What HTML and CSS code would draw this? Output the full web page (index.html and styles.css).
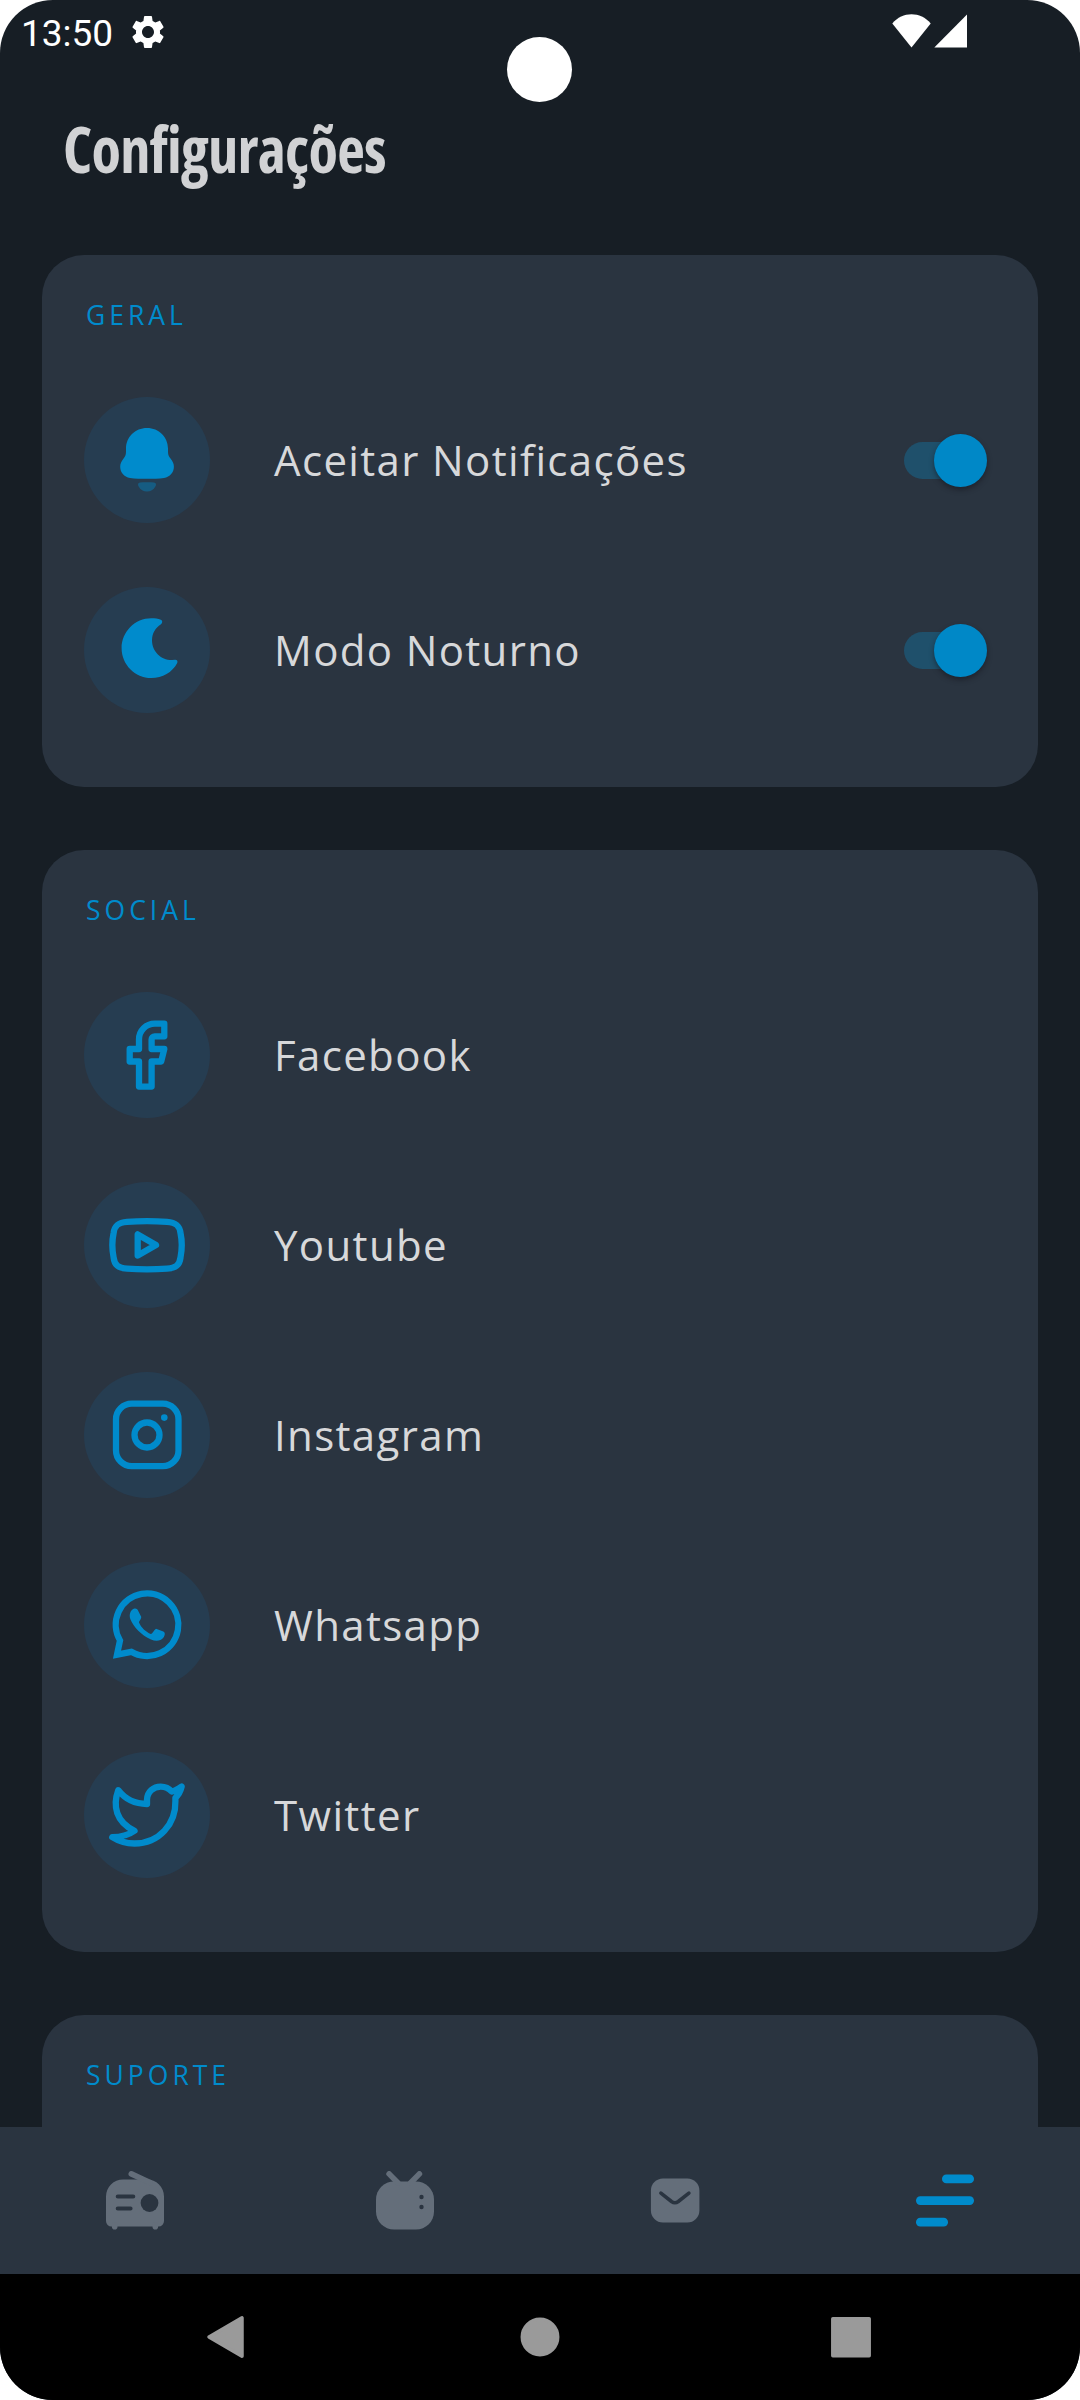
FILE: index.html
```html
<!DOCTYPE html>
<html lang="pt-BR">
<head>
  <meta charset="utf-8">
  <title>Configurações</title>
  <meta name="viewport" content="width=device-width">
  <link rel="stylesheet" href="styles.css">
</head>
<body>

<div class="screen">
  <div class="camera"></div>

  <header class="status-bar">
    <span class="clock">13:50</span>
    <svg class="status-gear" viewBox="0 0 24 24"><path d="M19.14 12.94c.04-.3.06-.61.06-.94 0-.32-.02-.64-.07-.94l2.03-1.58c.18-.14.23-.41.12-.61l-1.92-3.32c-.12-.22-.37-.29-.59-.22l-2.39.96c-.5-.38-1.03-.7-1.62-.94l-.36-2.54c-.04-.24-.24-.41-.48-.41h-3.84c-.24 0-.43.17-.47.41l-.36 2.54c-.59.24-1.13.57-1.62.94l-2.39-.96c-.22-.08-.47 0-.59.22L2.74 8.87c-.12.21-.08.47.12.61l2.03 1.58c-.05.3-.09.63-.09.94s.02.64.07.94l-2.03 1.58c-.18.14-.23.41-.12.61l1.92 3.32c.12.22.37.29.59.22l2.39-.96c.5.38 1.03.7 1.62.94l.36 2.54c.05.24.24.41.48.41h3.84c.24 0 .44-.17.47-.41l.36-2.54c.59-.24 1.13-.56 1.62-.94l2.39.96c.22.08.47 0 .59-.22l1.92-3.32c.12-.22.07-.47-.12-.61l-2.01-1.58zM12 15.6c-1.98 0-3.6-1.62-3.6-3.6s1.62-3.6 3.6-3.6 3.6 1.62 3.6 3.6-1.62 3.6-3.6 3.6z"/></svg>
    <svg class="status-signal" viewBox="0 0 76 34"><path d="M.3 9.4C10.500-2.800 28.500-2.800 38.700 9.400L19.500 33.500Z"/><path d="M42.300 33.500L75 .5V33.500Z"/></svg>
  </header>

  <main class="content">
    <h1 class="title"><span>Configurações</span></h1>

    <section class="card">
      <h2 class="card-label">GERAL</h2>
      <ul class="rows">
        <li class="row">
          <span class="badge"><svg class="solid" viewBox="0 0 126 126"><path d="M63 31C51 31 42 40.200 42 51.500V55C42 58 41 59.500 39.400 61.800C37.300 64.500 36.200 66.800 36.200 69.700C36.200 75.500 40 79.800 46 80.900C56 82.100 70 82.100 80 80.900C86 79.800 89.900 75.500 89.900 69.700C89.900 66.800 88.800 64.500 86.700 61.800C85 59.500 84 58 84 55V51.500C84 40.200 75 31 63 31Z"/><path class="faded" d="M56 85.600C60 85 66 85 70 85.600C72 86 72.500 87.500 71.500 89.300C69.500 93 66.500 94.600 63 94.600S56.500 93 54.500 89.300C53.500 87.500 54 86 56 85.600Z"/></svg></span>
          <span class="row-label">Aceitar Notificações</span>
          <span class="switch"></span>
        </li>
        <li class="row">
          <span class="badge"><svg class="solid" viewBox="0 0 126 126"><path d="M67.300 31.300C71 31.300 74 31.700 76.800 32.700C78.700 33.600 78.700 35.600 77 37.200C71 41 68 46.500 68 53.300C68 64.300 76.700 73.200 88 73.100L91 72.700C93.200 72.600 94.100 74.200 93.100 76.200C88.300 85.200 78.500 91 67.300 91C51 91 37.600 77.500 37.600 61.200C37.600 44.700 51 31.300 67.300 31.300Z"/></svg></span>
          <span class="row-label">Modo Noturno</span>
          <span class="switch"></span>
        </li>
      </ul>
    </section>

    <section class="card">
      <h2 class="card-label">SOCIAL</h2>
      <ul class="rows">
        <li class="row">
          <span class="badge"><svg viewBox="0 0 126 126"><path d="M80.300 31.700V44.300H70.800A3.200 3.200 0 0 0 67.600 47.500V57H80.300L77.200 69.500H67.600V94.600H55V69.500H45.700V57H55V47.500A15.800 15.800 0 0 1 70.800 31.700Z"/></svg></span>
          <span class="row-label">Facebook</span>
        </li>
        <li class="row">
          <span class="badge"><svg viewBox="0 0 126 126"><path d="M43 39.800C56 38.800 70 38.800 83 39.800C92 40.400 95.600 43.500 96.500 51C98.200 59 98.200 67 96.500 75.500C95.600 83 92 86 83 86.600C70 87.600 56 87.600 43 86.600C34 86 30.500 83 29.600 75.500C27.900 67 27.900 59 29.600 51C30.500 43.500 34 40.400 43 39.800Z"/><path d="M53.700 52.400V73.600L72 63Z"/></svg></span>
          <span class="row-label">Youtube</span>
        </li>
        <li class="row">
          <span class="badge"><svg viewBox="0 0 126 126"><rect x="32" y="31.700" width="62.500" height="62.500" rx="15.700"/><circle cx="63" cy="63" r="12.500"/><circle class="dot" cx="80.300" cy="45.600" r="3.300"/></svg></span>
          <span class="row-label">Instagram</span>
        </li>
        <li class="row">
          <span class="badge"><svg viewBox="0 0 126 126"><path class="miter" d="M36 78.500A31.300 31.300 0 1 1 47.300 89.800L33 92.700Z"/><path class="dot" d="M50.500 46.500C52.500 46.200 53.800 47.500 54.500 49.500L57.300 55C57 57.500 55 59 55 60.500C57 65.500 62 70 66.800 72C68.500 71.800 69.500 68.500 72 66.700L79.300 69.500C81.500 70.600 81 73.500 79.500 75.500C76.500 79.500 71.500 79.500 67 77.500C57.500 73.500 49.500 65 46.300 57C44.800 52.500 46.500 47.500 50.500 46.500Z"/></svg></span>
          <span class="row-label">Whatsapp</span>
        </li>
        <li class="row">
          <span class="badge"><svg viewBox="0 0 126 126"><path d="M34.300 38.200C41 47 51 52 63 52V47.500C63.300 39.500 69.500 34.600 76.700 34.600C81 34.600 85 36.300 87.700 39.600C91.500 39 95 36.500 97.700 34.600C96.500 39.500 94 43.500 91.400 45.800V49C92 72 75 91.500 50.500 91.500C42.500 91.500 35 89.500 28.300 85.200C37 85.200 44 83.500 50.500 78.800C32 70 28.500 54 34.300 38.200Z"/></svg></span>
          <span class="row-label">Twitter</span>
        </li>
      </ul>
    </section>

    <section class="card">
      <h2 class="card-label">SUPORTE</h2>
      <ul class="rows"></ul>
    </section>
  </main>

  <nav class="tabs">
    <a class="tab">
      <svg viewBox="0 0 60 60"><path d="M1 25.500A17 17 0 0 1 18 8.500H42A17 17 0 0 1 59 25.500V50A5.500 5.500 0 0 1 53.500 55.500H6.500A5.500 5.500 0 0 1 1 50Z"/><path class="line" d="M26.300 2.900L45 11.500M9.700 54V55.700M50.300 54V55.700"/><path class="cut" d="M12.800 25.500H28.200M12.800 37.500H25.500"/><circle class="hole" cx="44.500" cy="32" r="8.900"/></svg>
    </a>
    <a class="tab">
      <svg viewBox="0 0 60 60"><rect x="1" y="10.500" width="58" height="48" rx="18"/><path class="line" d="M14.100 2.900L23 12M44.400 2.900L35.500 12"/><circle class="hole" cx="46.500" cy="26" r="2.200"/><circle class="hole" cx="46.500" cy="36" r="2.200"/></svg>
    </a>
    <a class="tab">
      <svg viewBox="0 0 60 60"><rect x="5.900" y="7.500" width="48.500" height="44" rx="12"/><path class="cut thin" d="M15.900 22.200L26.500 30.500Q29.900 33 33.300 30.500L43.900 22.200"/></svg>
    </a>
    <a class="tab active">
      <svg viewBox="0 0 60 60"><rect x="27" y="3.500" width="32" height="8.700" rx="4.300"/><rect x="1" y="25.200" width="58" height="8.700" rx="4.300"/><rect x="1" y="46.800" width="32" height="8.700" rx="4.300"/></svg>
    </a>
  </nav>

  <footer class="system-nav">
    <svg viewBox="0 0 44 44"><path d="M3 22L36 2.800V41.200Z"/></svg>
    <svg viewBox="0 0 44 44"><circle cx="22" cy="22" r="17.700"/></svg>
    <svg viewBox="0 0 44 44"><rect x="2.800" y="3.800" width="36.400" height="37" /></svg>
  </footer>
</div>

</body>
</html>
```
FILE: styles.css
```css
*,
*:before,
*:after {
  box-sizing: border-box;
}

body,
html {
  margin: 0;
  padding: 0;
  height: 100%;
}

body {
  background: #fff;
  font-family: 'Open Sans', 'Noto Sans', sans-serif;
}

h1, h2, ul {
  margin: 0;
  padding: 0;
  font-weight: 400;
  list-style: none;
}

.screen {
  position: relative;
  display: flex;
  flex-direction: column;
  width: 1080px;
  height: 2400px;
  overflow: hidden;
  border-radius: 53px;
  background: #171e25;
}

.camera {
  position: absolute;
  top: 37px;
  left: 507px;
  width: 65px;
  height: 65px;
  border-radius: 50%;
  background: #fff;
}

.status-bar {
  display: flex;
  align-items: center;
  height: 66px;
  padding: 0 112px 2px 21px;
  fill: #fff;
}

.clock {
  padding-top: 2px;
  color: #fff;
  font: 37px Roboto, sans-serif;
}

.status-gear {
  width: 40px;
  height: 40px;
  margin-left: 15px;
}

.status-signal {
  width: 76px;
  height: 34px;
  margin: 0 0 3px auto;
}

.content {
  flex: 1;
  display: flex;
  flex-direction: column;
  gap: 63px;
  min-height: 0;
  overflow: hidden;
  padding: 0 42px;
}

.title {
  flex: none;
  height: 126px;
  padding: 38px 0 0 21px;
  color: #d1d2d4;
  font-size: 65px;
  font-weight: 700;
  font-stretch: 75%;
  line-height: 88px;
  letter-spacing: -0.8px;
}

.title span {
  display: inline-block;
  transform: scaleX(0.93);
  transform-origin: left;
}

.card {
  flex: none;
  padding: 42px 42px 74px;
  border-radius: 42px;
  background: #2a3440;
}

.card-label {
  height: 100px;
  padding-left: 2px;
  color: #008bcc;
  font-size: 26.5px;
  font-stretch: 93%;
  line-height: 37px;
  letter-spacing: 4px;
}

.rows {
  display: flex;
  flex-direction: column;
  gap: 64px;
}

.row {
  display: flex;
  align-items: center;
  height: 126px;
}

.badge {
  width: 126px;
  height: 126px;
  border-radius: 50%;
  background: #263d51;
}

.badge svg {
  display: block;
  fill: none;
  stroke: #008bcc;
  stroke-width: 6.3;
  stroke-linejoin: round;
}

.badge .miter {
  stroke-linejoin: miter;
}

.badge .solid,
.badge .dot {
  fill: #008bcc;
  stroke: none;
}

.badge .faded {
  opacity: 0.4;
}

.row-label {
  margin: 0 0 2px 64px;
  color: #d7d8da;
  font-size: 42px;
  letter-spacing: 1.35px;
}

.switch {
  position: relative;
  width: 74px;
  height: 37px;
  margin: 0 18px 0 auto;
  border-radius: 19px;
  background: #1f506b;
}

.switch:after {
  content: '';
  position: absolute;
  top: -8px;
  right: -9px;
  width: 53px;
  height: 53px;
  border-radius: 50%;
  background: #0088c7;
  box-shadow: 0 3px 5px rgba(20, 20, 28, 0.5);
}

.tabs {
  display: flex;
  height: 147px;
  background: #2a3440;
}

.tab {
  flex: 1;
  display: flex;
  align-items: center;
  justify-content: center;
  fill: #646e7a;
  stroke-linecap: round;
  stroke-linejoin: round;
}

.tab.active {
  fill: #008bcc;
}

.tab svg {
  width: 60px;
  height: 60px;
}

.tab .line {
  stroke: #646e7a;
  stroke-width: 5.6;
}

.tab .cut {
  fill: none;
  stroke: #2a3440;
  stroke-width: 4.2;
}

.tab .thin {
  stroke-width: 3.6;
}

.tab .hole {
  fill: #2a3440;
}

.system-nav {
  display: flex;
  align-items: center;
  justify-content: space-around;
  height: 126px;
  padding: 0 72px;
  background: #000;
}

.system-nav svg {
  width: 44px;
  height: 44px;
  fill: #9a9a9a;
  stroke: #9a9a9a;
  stroke-width: 3.5;
  stroke-linejoin: round;
}
```
